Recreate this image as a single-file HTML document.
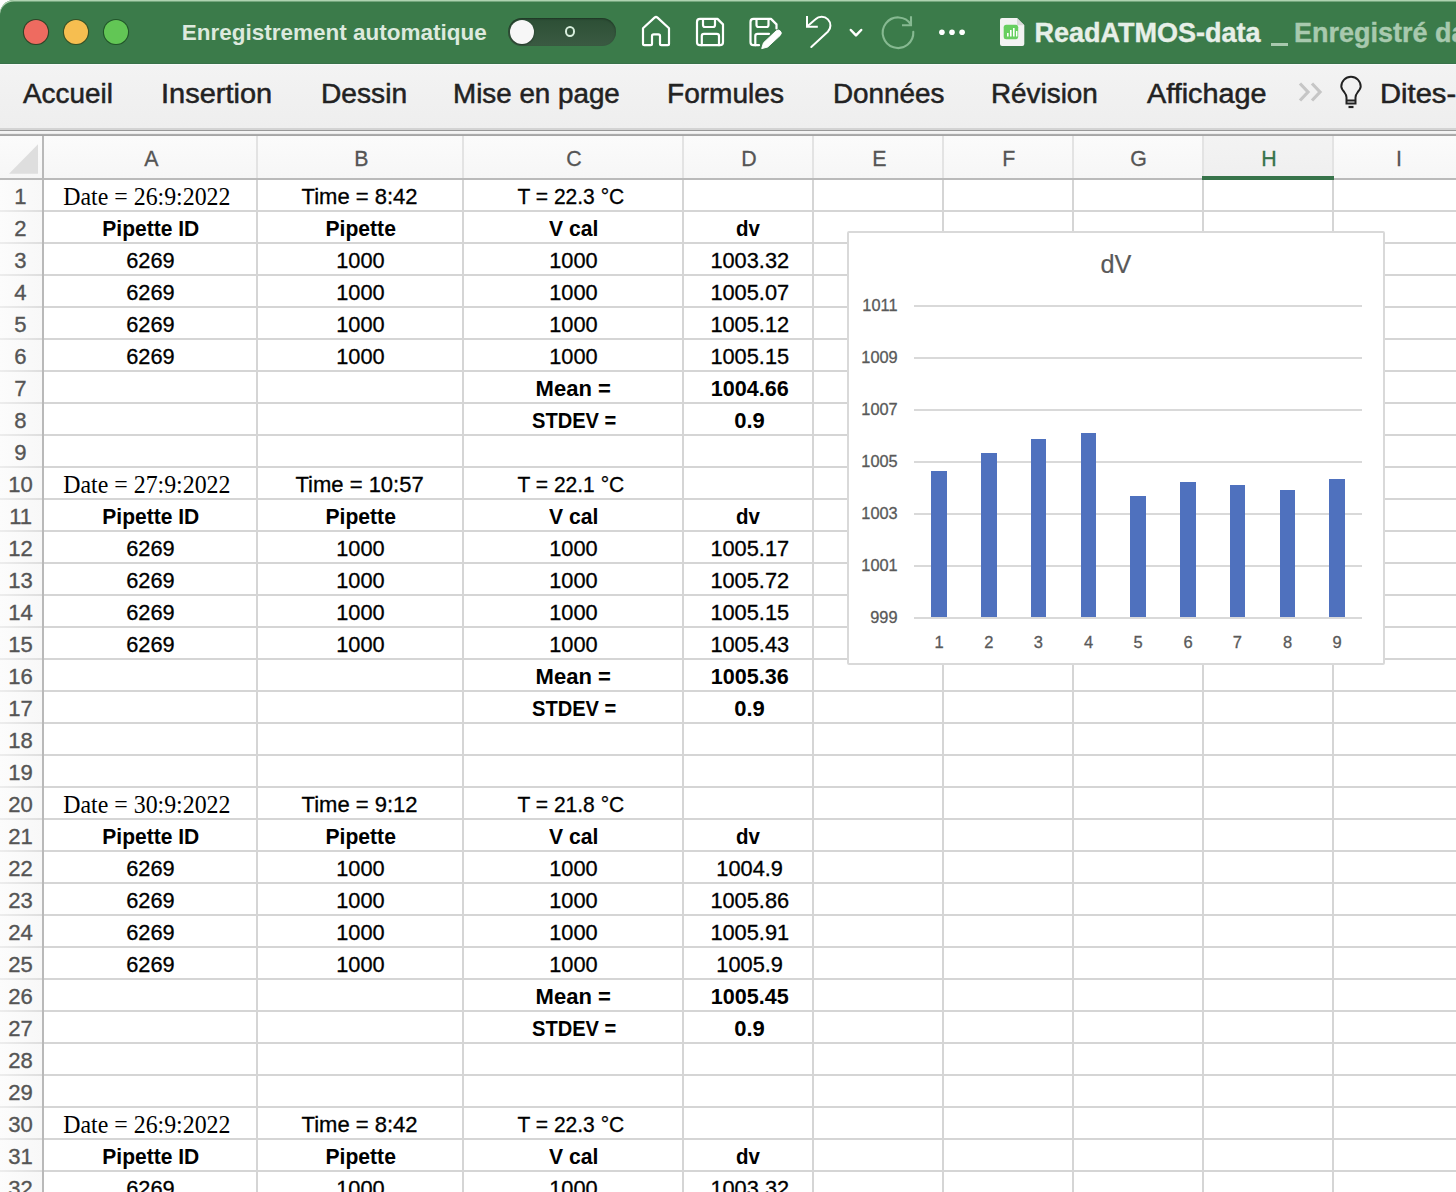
<!DOCTYPE html>
<html><head><meta charset="utf-8"><style>
html,body{margin:0;padding:0;}
body{width:1456px;height:1192px;overflow:hidden;position:relative;background:#fff;font-family:"Liberation Sans",sans-serif;}
.r{position:absolute;box-sizing:content-box;}
.t{position:absolute;line-height:0;height:0;white-space:pre;}
</style></head><body>
<div class="r" style="left:0px;top:0px;width:1456px;height:64px;background:#3b7b4a;border-top-left-radius:14px;box-shadow:inset 0 1.5px 0 #aed2b0;"></div>
<div class="r" style="left:0px;top:63px;width:1456px;height:1px;background:#38724a;"></div>
<div class="r" style="left:23.9px;top:19.6px;width:24px;height:24px;border-radius:50%;background:#ee6b60;box-shadow:0 0 0 1.1px rgba(40,20,10,.55);"></div>
<div class="r" style="left:63.900000000000006px;top:19.6px;width:24px;height:24px;border-radius:50%;background:#f6be50;box-shadow:0 0 0 1.1px rgba(50,40,0,.5);"></div>
<div class="r" style="left:104px;top:19.6px;width:24px;height:24px;border-radius:50%;background:#62c655;box-shadow:0 0 0 1.1px rgba(0,40,0,.45);"></div>
<div class="t" style="left:181.80px;top:32.80px;font-weight:bold;font-size:22.5px;font-family:'Liberation Sans', sans-serif;color:#dde9de;transform-origin:0 0;transform:scaleX(1.0);">Enregistrement automatique</div>
<div class="r" style="left:508px;top:18px;width:108px;height:28px;border-radius:14px;background:linear-gradient(#2c4f35,#3a5a42);box-shadow:inset 0 1px 2px rgba(0,0,0,.35);"></div>
<div class="r" style="left:510px;top:19.8px;width:24px;height:24px;border-radius:50%;background:#f7f7f7;box-shadow:0 1px 2px rgba(0,0,0,.4);"></div>
<div class="r" style="left:564.7px;top:25.9px;width:6.6px;height:7px;border:2px solid #d8eedd;border-radius:50%;"></div>
<svg class="r" style="left:0;top:0" width="1456" height="64" viewBox="0 0 1456 64">
<g fill="none" stroke="#ffffff" stroke-width="2.2" stroke-linejoin="round" stroke-linecap="round">
<path d="M643 28.2 L654.5 17.6 Q656 16.4 657.5 17.6 L669 28.2 L669 43.8 Q669 45.2 667.6 45.2 L661.4 45.2 Q660 45.2 660 43.8 L660 36 Q660 34.3 658.3 34.3 L653.7 34.3 Q652 34.3 652 36 L652 43.8 Q652 45.2 650.6 45.2 L644.4 45.2 Q643 45.2 643 43.8 Z"/>
<path d="M700 18.9 L717.5 18.9 L723 24.4 L723 42.2 Q723 45.2 720 45.2 L700 45.2 Q697 45.2 697 42.2 L697 21.9 Q697 18.9 700 18.9 Z"/>
<path d="M703 19 L703 25 Q703 27 705 27 L713 27 Q715 27 715 25 L715 19"/>
<path d="M701.8 45.2 L701.8 36 Q701.8 33.8 704 33.8 L716.8 33.8 Q719 33.8 719 36 L719 45.2"/>
<path d="M759 45.2 L753.5 45.2 Q750.5 45.2 750.5 42.2 L750.5 21.9 Q750.5 18.9 753.5 18.9 L771 18.9 L776.5 24.4 L776.5 28.5"/>
<path d="M756.5 19 L756.5 25 Q756.5 27 758.5 27 L766.5 27 Q768.5 27 768.5 25 L768.5 19"/>
<path d="M755.3 45.2 L755.3 36 Q755.3 33.8 757.5 33.8 L769 33.8"/>
</g>
<path transform="translate(-1.5,1.8)" d="M763.2 46.8 L765 41 L777.5 29.2 Q779.8 27.2 781.8 29.2 Q783.8 31.2 781.8 33.5 L769.2 45.2 Z" fill="#ffffff" stroke="#ffffff" stroke-width="1" stroke-linejoin="round"/>
<g fill="none" stroke="#ffffff" stroke-width="2.2" stroke-linecap="round" stroke-linejoin="round">
<path d="M807 16 L807 26.8 L817.8 26.8" stroke-linecap="butt" stroke-linejoin="miter" stroke-width="2"/>
<path d="M808 25.8 L815.5 19.3 A8.7 8.7 0 0 1 827.8 31.8 L811.3 47" stroke-width="2"/>
<path d="M850.8 30 L856 35.4 L861.2 30" stroke-width="2.5"/>
</g>
<g fill="none" stroke="#86b991" stroke-width="2.1">
<path d="M913.3 31.8 A15.3 15.3 0 1 1 911 24.6" stroke-linecap="round"/>
<path d="M911 16.2 L911 25.3 L902 25.3" stroke-linecap="butt" stroke-linejoin="miter"/>
</g>
<circle cx="941.9" cy="32.2" r="2.8" fill="#ffffff"/><circle cx="952" cy="32.2" r="2.8" fill="#ffffff"/><circle cx="962.1" cy="32.2" r="2.8" fill="#ffffff"/>
<path d="M1002 18 L1017 18 L1024.3 25.3 L1024.3 44 Q1024.3 46 1022.3 46 L1002 46 Q1000 46 1000 44 L1000 20 Q1000 18 1002 18 Z" fill="#f3f3f3"/>
<path d="M1017 18 L1017 25.3 L1024.3 25.3 Z" fill="#d9d9d9"/>
<rect x="1003.7" y="24.8" width="14.5" height="14.5" rx="2.5" fill="#67cf60"/>
<g fill="#fff"><rect x="1007" y="33" width="1.6" height="3.5"/><rect x="1010" y="30" width="1.6" height="6.5"/><rect x="1013" y="28" width="1.6" height="8.5"/><rect x="1016" y="31" width="1.4" height="5.5"/></g>
</svg>
<div class="t" style="left:1034.50px;top:33.44px;font-weight:bold;font-size:27px;font-family:'Liberation Sans', sans-serif;color:#e7efe8;transform-origin:0 0;transform:scaleX(1.0);-webkit-text-stroke:0.4px #e7efe8;">ReadATMOS-data</div>
<div class="r" style="left:1271px;top:43px;width:17px;height:3px;background:#a8c9ae;"></div>
<div class="t" style="left:1294.00px;top:33.44px;font-weight:bold;font-size:27px;font-family:'Liberation Sans', sans-serif;color:#a8c9ae;transform-origin:0 0;transform:scaleX(1.0);-webkit-text-stroke:0.4px #a8c9ae;">Enregistré da</div>
<div class="r" style="left:0px;top:64px;width:1456px;height:1px;background:#f9fbf9;"></div>
<div class="r" style="left:0px;top:65px;width:1456px;height:63px;background:linear-gradient(#f3f3f3,#eeeeee);"></div>
<div class="r" style="left:0px;top:128px;width:1456px;height:2px;background:#d3d3d3;"></div>
<div class="r" style="left:0px;top:130px;width:1456px;height:1px;background:#9a9a9a;"></div>
<div class="r" style="left:0px;top:131px;width:1456px;height:2px;background:#f4f4f4;"></div>
<div class="r" style="left:0px;top:133px;width:1456px;height:1px;background:#ebebeb;"></div>
<div class="r" style="left:0px;top:134px;width:1456px;height:1px;background:#acacac;"></div>
<div class="r" style="left:0px;top:135px;width:1456px;height:1px;background:#a6a6a6;"></div>
<div class="t" style="left:23.20px;top:93.84px;font-weight:normal;font-size:27px;font-family:'Liberation Sans', sans-serif;color:#222222;transform-origin:0 0;transform:scaleX(1.032);-webkit-text-stroke:0.5px #222;">Accueil</div>
<div class="t" style="left:161.20px;top:93.84px;font-weight:normal;font-size:27px;font-family:'Liberation Sans', sans-serif;color:#222222;transform-origin:0 0;transform:scaleX(1.073);-webkit-text-stroke:0.5px #222;">Insertion</div>
<div class="t" style="left:321.00px;top:93.84px;font-weight:normal;font-size:27px;font-family:'Liberation Sans', sans-serif;color:#222222;transform-origin:0 0;transform:scaleX(1.043);-webkit-text-stroke:0.5px #222;">Dessin</div>
<div class="t" style="left:452.90px;top:93.84px;font-weight:normal;font-size:27px;font-family:'Liberation Sans', sans-serif;color:#222222;transform-origin:0 0;transform:scaleX(1.029);-webkit-text-stroke:0.5px #222;">Mise en page</div>
<div class="t" style="left:666.50px;top:93.84px;font-weight:normal;font-size:27px;font-family:'Liberation Sans', sans-serif;color:#222222;transform-origin:0 0;transform:scaleX(1.039);-webkit-text-stroke:0.5px #222;">Formules</div>
<div class="t" style="left:832.50px;top:93.84px;font-weight:normal;font-size:27px;font-family:'Liberation Sans', sans-serif;color:#222222;transform-origin:0 0;transform:scaleX(1.032);-webkit-text-stroke:0.5px #222;">Données</div>
<div class="t" style="left:991.30px;top:93.84px;font-weight:normal;font-size:27px;font-family:'Liberation Sans', sans-serif;color:#222222;transform-origin:0 0;transform:scaleX(1.032);-webkit-text-stroke:0.5px #222;">Révision</div>
<div class="t" style="left:1146.90px;top:93.84px;font-weight:normal;font-size:27px;font-family:'Liberation Sans', sans-serif;color:#222222;transform-origin:0 0;transform:scaleX(1.067);-webkit-text-stroke:0.5px #222;">Affichage</div>
<svg class="r" style="left:0;top:64" width="1456" height="64" viewBox="0 64 1456 64">
<g fill="none" stroke="#c6c6c6" stroke-width="3.2" stroke-linecap="butt" stroke-linejoin="miter">
<path d="M1300 83.5 L1308 92 L1300 100.5"/><path d="M1312 83.5 L1320 92 L1312 100.5"/>
</g>
<g fill="none" stroke="#222" stroke-width="2">
<path d="M1346.5 97.5 Q1346.5 95 1344.2 92 Q1341.3 88.5 1341.3 86.5 A9.7 9.7 0 0 1 1360.7 86.5 Q1360.7 88.5 1357.8 92 Q1355.5 95 1355.5 97.5 L1355.5 103.5 L1346.5 103.5 Z"/>
<path d="M1346.5 100.5 L1355.5 100.5"/><path d="M1348.5 107 L1353.5 107" stroke-width="2.2"/>
</g>
</svg>
<div class="t" style="left:1379.90px;top:93.84px;font-weight:normal;font-size:27px;font-family:'Liberation Sans', sans-serif;color:#222222;transform-origin:0 0;transform:scaleX(1.08);-webkit-text-stroke:0.5px #222;">Dites-</div>
<div class="r" style="left:0px;top:136px;width:1456px;height:42px;background:linear-gradient(#fbfbfb,#f6f6f6);"></div>
<div class="r" style="left:1203px;top:136px;width:130px;height:42px;background:linear-gradient(#f3f3f3,#efefef);"></div>
<div class="r" style="left:0px;top:179px;width:42px;height:1013px;background:linear-gradient(to right,#fcfcfc,#f8f8f8);"></div>
<div class="r" style="left:43px;top:180px;width:1413px;height:1012px;background:#ffffff;"></div>
<div class="r" style="left:0px;top:210px;width:42px;height:2px;background:linear-gradient(to right,#ededed,#dedede);"></div>
<div class="r" style="left:43px;top:210px;width:1413px;height:2px;background:#d5d5d5;"></div>
<div class="r" style="left:0px;top:242px;width:42px;height:2px;background:linear-gradient(to right,#ededed,#dedede);"></div>
<div class="r" style="left:43px;top:242px;width:1413px;height:2px;background:#d5d5d5;"></div>
<div class="r" style="left:0px;top:274px;width:42px;height:2px;background:linear-gradient(to right,#ededed,#dedede);"></div>
<div class="r" style="left:43px;top:274px;width:1413px;height:2px;background:#d5d5d5;"></div>
<div class="r" style="left:0px;top:306px;width:42px;height:2px;background:linear-gradient(to right,#ededed,#dedede);"></div>
<div class="r" style="left:43px;top:306px;width:1413px;height:2px;background:#d5d5d5;"></div>
<div class="r" style="left:0px;top:338px;width:42px;height:2px;background:linear-gradient(to right,#ededed,#dedede);"></div>
<div class="r" style="left:43px;top:338px;width:1413px;height:2px;background:#d5d5d5;"></div>
<div class="r" style="left:0px;top:370px;width:42px;height:2px;background:linear-gradient(to right,#ededed,#dedede);"></div>
<div class="r" style="left:43px;top:370px;width:1413px;height:2px;background:#d5d5d5;"></div>
<div class="r" style="left:0px;top:402px;width:42px;height:2px;background:linear-gradient(to right,#ededed,#dedede);"></div>
<div class="r" style="left:43px;top:402px;width:1413px;height:2px;background:#d5d5d5;"></div>
<div class="r" style="left:0px;top:434px;width:42px;height:2px;background:linear-gradient(to right,#ededed,#dedede);"></div>
<div class="r" style="left:43px;top:434px;width:1413px;height:2px;background:#d5d5d5;"></div>
<div class="r" style="left:0px;top:466px;width:42px;height:2px;background:linear-gradient(to right,#ededed,#dedede);"></div>
<div class="r" style="left:43px;top:466px;width:1413px;height:2px;background:#d5d5d5;"></div>
<div class="r" style="left:0px;top:498px;width:42px;height:2px;background:linear-gradient(to right,#ededed,#dedede);"></div>
<div class="r" style="left:43px;top:498px;width:1413px;height:2px;background:#d5d5d5;"></div>
<div class="r" style="left:0px;top:530px;width:42px;height:2px;background:linear-gradient(to right,#ededed,#dedede);"></div>
<div class="r" style="left:43px;top:530px;width:1413px;height:2px;background:#d5d5d5;"></div>
<div class="r" style="left:0px;top:562px;width:42px;height:2px;background:linear-gradient(to right,#ededed,#dedede);"></div>
<div class="r" style="left:43px;top:562px;width:1413px;height:2px;background:#d5d5d5;"></div>
<div class="r" style="left:0px;top:594px;width:42px;height:2px;background:linear-gradient(to right,#ededed,#dedede);"></div>
<div class="r" style="left:43px;top:594px;width:1413px;height:2px;background:#d5d5d5;"></div>
<div class="r" style="left:0px;top:626px;width:42px;height:2px;background:linear-gradient(to right,#ededed,#dedede);"></div>
<div class="r" style="left:43px;top:626px;width:1413px;height:2px;background:#d5d5d5;"></div>
<div class="r" style="left:0px;top:658px;width:42px;height:2px;background:linear-gradient(to right,#ededed,#dedede);"></div>
<div class="r" style="left:43px;top:658px;width:1413px;height:2px;background:#d5d5d5;"></div>
<div class="r" style="left:0px;top:690px;width:42px;height:2px;background:linear-gradient(to right,#ededed,#dedede);"></div>
<div class="r" style="left:43px;top:690px;width:1413px;height:2px;background:#d5d5d5;"></div>
<div class="r" style="left:0px;top:722px;width:42px;height:2px;background:linear-gradient(to right,#ededed,#dedede);"></div>
<div class="r" style="left:43px;top:722px;width:1413px;height:2px;background:#d5d5d5;"></div>
<div class="r" style="left:0px;top:754px;width:42px;height:2px;background:linear-gradient(to right,#ededed,#dedede);"></div>
<div class="r" style="left:43px;top:754px;width:1413px;height:2px;background:#d5d5d5;"></div>
<div class="r" style="left:0px;top:786px;width:42px;height:2px;background:linear-gradient(to right,#ededed,#dedede);"></div>
<div class="r" style="left:43px;top:786px;width:1413px;height:2px;background:#d5d5d5;"></div>
<div class="r" style="left:0px;top:818px;width:42px;height:2px;background:linear-gradient(to right,#ededed,#dedede);"></div>
<div class="r" style="left:43px;top:818px;width:1413px;height:2px;background:#d5d5d5;"></div>
<div class="r" style="left:0px;top:850px;width:42px;height:2px;background:linear-gradient(to right,#ededed,#dedede);"></div>
<div class="r" style="left:43px;top:850px;width:1413px;height:2px;background:#d5d5d5;"></div>
<div class="r" style="left:0px;top:882px;width:42px;height:2px;background:linear-gradient(to right,#ededed,#dedede);"></div>
<div class="r" style="left:43px;top:882px;width:1413px;height:2px;background:#d5d5d5;"></div>
<div class="r" style="left:0px;top:914px;width:42px;height:2px;background:linear-gradient(to right,#ededed,#dedede);"></div>
<div class="r" style="left:43px;top:914px;width:1413px;height:2px;background:#d5d5d5;"></div>
<div class="r" style="left:0px;top:946px;width:42px;height:2px;background:linear-gradient(to right,#ededed,#dedede);"></div>
<div class="r" style="left:43px;top:946px;width:1413px;height:2px;background:#d5d5d5;"></div>
<div class="r" style="left:0px;top:978px;width:42px;height:2px;background:linear-gradient(to right,#ededed,#dedede);"></div>
<div class="r" style="left:43px;top:978px;width:1413px;height:2px;background:#d5d5d5;"></div>
<div class="r" style="left:0px;top:1010px;width:42px;height:2px;background:linear-gradient(to right,#ededed,#dedede);"></div>
<div class="r" style="left:43px;top:1010px;width:1413px;height:2px;background:#d5d5d5;"></div>
<div class="r" style="left:0px;top:1042px;width:42px;height:2px;background:linear-gradient(to right,#ededed,#dedede);"></div>
<div class="r" style="left:43px;top:1042px;width:1413px;height:2px;background:#d5d5d5;"></div>
<div class="r" style="left:0px;top:1074px;width:42px;height:2px;background:linear-gradient(to right,#ededed,#dedede);"></div>
<div class="r" style="left:43px;top:1074px;width:1413px;height:2px;background:#d5d5d5;"></div>
<div class="r" style="left:0px;top:1106px;width:42px;height:2px;background:linear-gradient(to right,#ededed,#dedede);"></div>
<div class="r" style="left:43px;top:1106px;width:1413px;height:2px;background:#d5d5d5;"></div>
<div class="r" style="left:0px;top:1138px;width:42px;height:2px;background:linear-gradient(to right,#ededed,#dedede);"></div>
<div class="r" style="left:43px;top:1138px;width:1413px;height:2px;background:#d5d5d5;"></div>
<div class="r" style="left:0px;top:1170px;width:42px;height:2px;background:linear-gradient(to right,#ededed,#dedede);"></div>
<div class="r" style="left:43px;top:1170px;width:1413px;height:2px;background:#d5d5d5;"></div>
<div class="r" style="left:0px;top:1202px;width:42px;height:2px;background:linear-gradient(to right,#ededed,#dedede);"></div>
<div class="r" style="left:43px;top:1202px;width:1413px;height:2px;background:#d5d5d5;"></div>
<div class="r" style="left:256px;top:136px;width:2px;height:42px;background:#e3e3e3;"></div>
<div class="r" style="left:256px;top:180px;width:2px;height:1012px;background:#d5d5d5;"></div>
<div class="r" style="left:462px;top:136px;width:2px;height:42px;background:#e3e3e3;"></div>
<div class="r" style="left:462px;top:180px;width:2px;height:1012px;background:#d5d5d5;"></div>
<div class="r" style="left:682px;top:136px;width:2px;height:42px;background:#e3e3e3;"></div>
<div class="r" style="left:682px;top:180px;width:2px;height:1012px;background:#d5d5d5;"></div>
<div class="r" style="left:812px;top:136px;width:2px;height:42px;background:#e3e3e3;"></div>
<div class="r" style="left:812px;top:180px;width:2px;height:1012px;background:#d5d5d5;"></div>
<div class="r" style="left:942px;top:136px;width:2px;height:42px;background:#e3e3e3;"></div>
<div class="r" style="left:942px;top:180px;width:2px;height:1012px;background:#d5d5d5;"></div>
<div class="r" style="left:1072px;top:136px;width:2px;height:42px;background:#e3e3e3;"></div>
<div class="r" style="left:1072px;top:180px;width:2px;height:1012px;background:#d5d5d5;"></div>
<div class="r" style="left:1202px;top:136px;width:2px;height:42px;background:#e3e3e3;"></div>
<div class="r" style="left:1202px;top:180px;width:2px;height:1012px;background:#d5d5d5;"></div>
<div class="r" style="left:1332px;top:136px;width:2px;height:42px;background:#e3e3e3;"></div>
<div class="r" style="left:1332px;top:180px;width:2px;height:1012px;background:#d5d5d5;"></div>
<div class="r" style="left:0px;top:178px;width:1456px;height:2px;background:#bababa;"></div>
<div class="r" style="left:42px;top:136px;width:2px;height:1056px;background:#b9b9b9;"></div>
<div class="r" style="left:1202px;top:176px;width:132px;height:4px;background:#37734a;"></div>
<svg class="r" style="left:0;top:135" width="42" height="43" viewBox="0 135 42 43"><path d="M9 173.8 L38 144.2 L38 173.8 Z" fill="#dedede"/></svg>
<div class="t" style="left:-149.00px;width:600px;top:158.58px;text-align:center;font-weight:normal;font-size:22px;font-family:'Liberation Sans', sans-serif;color:#555555;-webkit-text-stroke:0.3px #555555;"><span style="display:inline-block;transform:scaleX(0.97)">A</span></div>
<div class="t" style="left:61.00px;width:600px;top:158.58px;text-align:center;font-weight:normal;font-size:22px;font-family:'Liberation Sans', sans-serif;color:#555555;-webkit-text-stroke:0.3px #555555;"><span style="display:inline-block;transform:scaleX(0.97)">B</span></div>
<div class="t" style="left:274.00px;width:600px;top:158.58px;text-align:center;font-weight:normal;font-size:22px;font-family:'Liberation Sans', sans-serif;color:#555555;-webkit-text-stroke:0.3px #555555;"><span style="display:inline-block;transform:scaleX(0.97)">C</span></div>
<div class="t" style="left:449.00px;width:600px;top:158.58px;text-align:center;font-weight:normal;font-size:22px;font-family:'Liberation Sans', sans-serif;color:#555555;-webkit-text-stroke:0.3px #555555;"><span style="display:inline-block;transform:scaleX(0.97)">D</span></div>
<div class="t" style="left:579.00px;width:600px;top:158.58px;text-align:center;font-weight:normal;font-size:22px;font-family:'Liberation Sans', sans-serif;color:#555555;-webkit-text-stroke:0.3px #555555;"><span style="display:inline-block;transform:scaleX(0.97)">E</span></div>
<div class="t" style="left:709.00px;width:600px;top:158.58px;text-align:center;font-weight:normal;font-size:22px;font-family:'Liberation Sans', sans-serif;color:#555555;-webkit-text-stroke:0.3px #555555;"><span style="display:inline-block;transform:scaleX(0.97)">F</span></div>
<div class="t" style="left:839.00px;width:600px;top:158.58px;text-align:center;font-weight:normal;font-size:22px;font-family:'Liberation Sans', sans-serif;color:#555555;-webkit-text-stroke:0.3px #555555;"><span style="display:inline-block;transform:scaleX(0.97)">G</span></div>
<div class="t" style="left:969.00px;width:600px;top:158.58px;text-align:center;font-weight:normal;font-size:22px;font-family:'Liberation Sans', sans-serif;color:#37734a;-webkit-text-stroke:0.3px #37734a;"><span style="display:inline-block;transform:scaleX(0.97)">H</span></div>
<div class="t" style="left:1099.00px;width:600px;top:158.58px;text-align:center;font-weight:normal;font-size:22px;font-family:'Liberation Sans', sans-serif;color:#555555;-webkit-text-stroke:0.3px #555555;"><span style="display:inline-block;transform:scaleX(0.97)">I</span></div>
<div class="t" style="left:-279.50px;width:600px;top:197.00px;text-align:center;font-weight:normal;font-size:22.5px;font-family:'Liberation Sans', sans-serif;color:#555555;-webkit-text-stroke:0.35px #555555;"><span style="display:inline-block;transform:scaleX(0.98)">1</span></div>
<div class="t" style="left:-279.50px;width:600px;top:229.00px;text-align:center;font-weight:normal;font-size:22.5px;font-family:'Liberation Sans', sans-serif;color:#555555;-webkit-text-stroke:0.35px #555555;"><span style="display:inline-block;transform:scaleX(0.98)">2</span></div>
<div class="t" style="left:-279.50px;width:600px;top:261.00px;text-align:center;font-weight:normal;font-size:22.5px;font-family:'Liberation Sans', sans-serif;color:#555555;-webkit-text-stroke:0.35px #555555;"><span style="display:inline-block;transform:scaleX(0.98)">3</span></div>
<div class="t" style="left:-279.50px;width:600px;top:293.00px;text-align:center;font-weight:normal;font-size:22.5px;font-family:'Liberation Sans', sans-serif;color:#555555;-webkit-text-stroke:0.35px #555555;"><span style="display:inline-block;transform:scaleX(0.98)">4</span></div>
<div class="t" style="left:-279.50px;width:600px;top:325.00px;text-align:center;font-weight:normal;font-size:22.5px;font-family:'Liberation Sans', sans-serif;color:#555555;-webkit-text-stroke:0.35px #555555;"><span style="display:inline-block;transform:scaleX(0.98)">5</span></div>
<div class="t" style="left:-279.50px;width:600px;top:357.00px;text-align:center;font-weight:normal;font-size:22.5px;font-family:'Liberation Sans', sans-serif;color:#555555;-webkit-text-stroke:0.35px #555555;"><span style="display:inline-block;transform:scaleX(0.98)">6</span></div>
<div class="t" style="left:-279.50px;width:600px;top:389.00px;text-align:center;font-weight:normal;font-size:22.5px;font-family:'Liberation Sans', sans-serif;color:#555555;-webkit-text-stroke:0.35px #555555;"><span style="display:inline-block;transform:scaleX(0.98)">7</span></div>
<div class="t" style="left:-279.50px;width:600px;top:421.00px;text-align:center;font-weight:normal;font-size:22.5px;font-family:'Liberation Sans', sans-serif;color:#555555;-webkit-text-stroke:0.35px #555555;"><span style="display:inline-block;transform:scaleX(0.98)">8</span></div>
<div class="t" style="left:-279.50px;width:600px;top:453.00px;text-align:center;font-weight:normal;font-size:22.5px;font-family:'Liberation Sans', sans-serif;color:#555555;-webkit-text-stroke:0.35px #555555;"><span style="display:inline-block;transform:scaleX(0.98)">9</span></div>
<div class="t" style="left:-279.50px;width:600px;top:485.00px;text-align:center;font-weight:normal;font-size:22.5px;font-family:'Liberation Sans', sans-serif;color:#555555;-webkit-text-stroke:0.35px #555555;"><span style="display:inline-block;transform:scaleX(0.98)">10</span></div>
<div class="t" style="left:-279.50px;width:600px;top:517.00px;text-align:center;font-weight:normal;font-size:22.5px;font-family:'Liberation Sans', sans-serif;color:#555555;-webkit-text-stroke:0.35px #555555;"><span style="display:inline-block;transform:scaleX(0.98)">11</span></div>
<div class="t" style="left:-279.50px;width:600px;top:549.00px;text-align:center;font-weight:normal;font-size:22.5px;font-family:'Liberation Sans', sans-serif;color:#555555;-webkit-text-stroke:0.35px #555555;"><span style="display:inline-block;transform:scaleX(0.98)">12</span></div>
<div class="t" style="left:-279.50px;width:600px;top:581.00px;text-align:center;font-weight:normal;font-size:22.5px;font-family:'Liberation Sans', sans-serif;color:#555555;-webkit-text-stroke:0.35px #555555;"><span style="display:inline-block;transform:scaleX(0.98)">13</span></div>
<div class="t" style="left:-279.50px;width:600px;top:613.00px;text-align:center;font-weight:normal;font-size:22.5px;font-family:'Liberation Sans', sans-serif;color:#555555;-webkit-text-stroke:0.35px #555555;"><span style="display:inline-block;transform:scaleX(0.98)">14</span></div>
<div class="t" style="left:-279.50px;width:600px;top:645.00px;text-align:center;font-weight:normal;font-size:22.5px;font-family:'Liberation Sans', sans-serif;color:#555555;-webkit-text-stroke:0.35px #555555;"><span style="display:inline-block;transform:scaleX(0.98)">15</span></div>
<div class="t" style="left:-279.50px;width:600px;top:677.00px;text-align:center;font-weight:normal;font-size:22.5px;font-family:'Liberation Sans', sans-serif;color:#555555;-webkit-text-stroke:0.35px #555555;"><span style="display:inline-block;transform:scaleX(0.98)">16</span></div>
<div class="t" style="left:-279.50px;width:600px;top:709.00px;text-align:center;font-weight:normal;font-size:22.5px;font-family:'Liberation Sans', sans-serif;color:#555555;-webkit-text-stroke:0.35px #555555;"><span style="display:inline-block;transform:scaleX(0.98)">17</span></div>
<div class="t" style="left:-279.50px;width:600px;top:741.00px;text-align:center;font-weight:normal;font-size:22.5px;font-family:'Liberation Sans', sans-serif;color:#555555;-webkit-text-stroke:0.35px #555555;"><span style="display:inline-block;transform:scaleX(0.98)">18</span></div>
<div class="t" style="left:-279.50px;width:600px;top:773.00px;text-align:center;font-weight:normal;font-size:22.5px;font-family:'Liberation Sans', sans-serif;color:#555555;-webkit-text-stroke:0.35px #555555;"><span style="display:inline-block;transform:scaleX(0.98)">19</span></div>
<div class="t" style="left:-279.50px;width:600px;top:805.00px;text-align:center;font-weight:normal;font-size:22.5px;font-family:'Liberation Sans', sans-serif;color:#555555;-webkit-text-stroke:0.35px #555555;"><span style="display:inline-block;transform:scaleX(0.98)">20</span></div>
<div class="t" style="left:-279.50px;width:600px;top:837.00px;text-align:center;font-weight:normal;font-size:22.5px;font-family:'Liberation Sans', sans-serif;color:#555555;-webkit-text-stroke:0.35px #555555;"><span style="display:inline-block;transform:scaleX(0.98)">21</span></div>
<div class="t" style="left:-279.50px;width:600px;top:869.00px;text-align:center;font-weight:normal;font-size:22.5px;font-family:'Liberation Sans', sans-serif;color:#555555;-webkit-text-stroke:0.35px #555555;"><span style="display:inline-block;transform:scaleX(0.98)">22</span></div>
<div class="t" style="left:-279.50px;width:600px;top:901.00px;text-align:center;font-weight:normal;font-size:22.5px;font-family:'Liberation Sans', sans-serif;color:#555555;-webkit-text-stroke:0.35px #555555;"><span style="display:inline-block;transform:scaleX(0.98)">23</span></div>
<div class="t" style="left:-279.50px;width:600px;top:933.00px;text-align:center;font-weight:normal;font-size:22.5px;font-family:'Liberation Sans', sans-serif;color:#555555;-webkit-text-stroke:0.35px #555555;"><span style="display:inline-block;transform:scaleX(0.98)">24</span></div>
<div class="t" style="left:-279.50px;width:600px;top:965.00px;text-align:center;font-weight:normal;font-size:22.5px;font-family:'Liberation Sans', sans-serif;color:#555555;-webkit-text-stroke:0.35px #555555;"><span style="display:inline-block;transform:scaleX(0.98)">25</span></div>
<div class="t" style="left:-279.50px;width:600px;top:997.00px;text-align:center;font-weight:normal;font-size:22.5px;font-family:'Liberation Sans', sans-serif;color:#555555;-webkit-text-stroke:0.35px #555555;"><span style="display:inline-block;transform:scaleX(0.98)">26</span></div>
<div class="t" style="left:-279.50px;width:600px;top:1029.00px;text-align:center;font-weight:normal;font-size:22.5px;font-family:'Liberation Sans', sans-serif;color:#555555;-webkit-text-stroke:0.35px #555555;"><span style="display:inline-block;transform:scaleX(0.98)">27</span></div>
<div class="t" style="left:-279.50px;width:600px;top:1061.00px;text-align:center;font-weight:normal;font-size:22.5px;font-family:'Liberation Sans', sans-serif;color:#555555;-webkit-text-stroke:0.35px #555555;"><span style="display:inline-block;transform:scaleX(0.98)">28</span></div>
<div class="t" style="left:-279.50px;width:600px;top:1093.00px;text-align:center;font-weight:normal;font-size:22.5px;font-family:'Liberation Sans', sans-serif;color:#555555;-webkit-text-stroke:0.35px #555555;"><span style="display:inline-block;transform:scaleX(0.98)">29</span></div>
<div class="t" style="left:-279.50px;width:600px;top:1125.00px;text-align:center;font-weight:normal;font-size:22.5px;font-family:'Liberation Sans', sans-serif;color:#555555;-webkit-text-stroke:0.35px #555555;"><span style="display:inline-block;transform:scaleX(0.98)">30</span></div>
<div class="t" style="left:-279.50px;width:600px;top:1157.00px;text-align:center;font-weight:normal;font-size:22.5px;font-family:'Liberation Sans', sans-serif;color:#555555;-webkit-text-stroke:0.35px #555555;"><span style="display:inline-block;transform:scaleX(0.98)">31</span></div>
<div class="t" style="left:-279.50px;width:600px;top:1189.00px;text-align:center;font-weight:normal;font-size:22.5px;font-family:'Liberation Sans', sans-serif;color:#555555;-webkit-text-stroke:0.35px #555555;"><span style="display:inline-block;transform:scaleX(0.98)">32</span></div>
<div class="t" style="left:-153.00px;width:600px;top:197.13px;text-align:center;font-weight:normal;font-size:24.8px;font-family:'Liberation Serif', serif;color:#000;"><span style="display:inline-block;transform:scaleX(0.962)">Date = 26:9:2022</span></div>
<div class="t" style="left:59.60px;width:600px;top:197.38px;text-align:center;font-weight:normal;font-size:22px;font-family:'Liberation Sans', sans-serif;color:#000;-webkit-text-stroke:0.3px #000;"><span style="display:inline-block;transform:scaleX(1.0)">Time = 8:42</span></div>
<div class="t" style="left:270.40px;width:600px;top:197.38px;text-align:center;font-weight:normal;font-size:22px;font-family:'Liberation Sans', sans-serif;color:#000;-webkit-text-stroke:0.3px #000;"><span style="display:inline-block;transform:scaleX(0.955)">T = 22.3 °C</span></div>
<div class="t" style="left:-149.40px;width:600px;top:229.38px;text-align:center;font-weight:bold;font-size:22px;font-family:'Liberation Sans', sans-serif;color:#000;"><span style="display:inline-block;transform:scaleX(0.955)">Pipette ID</span></div>
<div class="t" style="left:61.10px;width:600px;top:229.38px;text-align:center;font-weight:bold;font-size:22px;font-family:'Liberation Sans', sans-serif;color:#000;"><span style="display:inline-block;transform:scaleX(0.96)">Pipette</span></div>
<div class="t" style="left:273.70px;width:600px;top:229.38px;text-align:center;font-weight:bold;font-size:22px;font-family:'Liberation Sans', sans-serif;color:#000;"><span style="display:inline-block;transform:scaleX(0.96)">V cal</span></div>
<div class="t" style="left:447.90px;width:600px;top:229.38px;text-align:center;font-weight:bold;font-size:22px;font-family:'Liberation Sans', sans-serif;color:#000;"><span style="display:inline-block;transform:scaleX(0.93)">dv</span></div>
<div class="t" style="left:-149.80px;width:600px;top:261.38px;text-align:center;font-weight:normal;font-size:22px;font-family:'Liberation Sans', sans-serif;color:#000;-webkit-text-stroke:0.3px #000;"><span style="display:inline-block;transform:scaleX(0.99)">6269</span></div>
<div class="t" style="left:60.00px;width:600px;top:261.38px;text-align:center;font-weight:normal;font-size:22px;font-family:'Liberation Sans', sans-serif;color:#000;-webkit-text-stroke:0.3px #000;"><span style="display:inline-block;transform:scaleX(0.99)">1000</span></div>
<div class="t" style="left:273.00px;width:600px;top:261.38px;text-align:center;font-weight:normal;font-size:22px;font-family:'Liberation Sans', sans-serif;color:#000;-webkit-text-stroke:0.3px #000;"><span style="display:inline-block;transform:scaleX(0.99)">1000</span></div>
<div class="t" style="left:449.30px;width:600px;top:261.38px;text-align:center;font-weight:normal;font-size:22px;font-family:'Liberation Sans', sans-serif;color:#000;-webkit-text-stroke:0.3px #000;"><span style="display:inline-block;transform:scaleX(0.99)">1003.32</span></div>
<div class="t" style="left:-149.80px;width:600px;top:293.38px;text-align:center;font-weight:normal;font-size:22px;font-family:'Liberation Sans', sans-serif;color:#000;-webkit-text-stroke:0.3px #000;"><span style="display:inline-block;transform:scaleX(0.99)">6269</span></div>
<div class="t" style="left:60.00px;width:600px;top:293.38px;text-align:center;font-weight:normal;font-size:22px;font-family:'Liberation Sans', sans-serif;color:#000;-webkit-text-stroke:0.3px #000;"><span style="display:inline-block;transform:scaleX(0.99)">1000</span></div>
<div class="t" style="left:273.00px;width:600px;top:293.38px;text-align:center;font-weight:normal;font-size:22px;font-family:'Liberation Sans', sans-serif;color:#000;-webkit-text-stroke:0.3px #000;"><span style="display:inline-block;transform:scaleX(0.99)">1000</span></div>
<div class="t" style="left:449.30px;width:600px;top:293.38px;text-align:center;font-weight:normal;font-size:22px;font-family:'Liberation Sans', sans-serif;color:#000;-webkit-text-stroke:0.3px #000;"><span style="display:inline-block;transform:scaleX(0.99)">1005.07</span></div>
<div class="t" style="left:-149.80px;width:600px;top:325.38px;text-align:center;font-weight:normal;font-size:22px;font-family:'Liberation Sans', sans-serif;color:#000;-webkit-text-stroke:0.3px #000;"><span style="display:inline-block;transform:scaleX(0.99)">6269</span></div>
<div class="t" style="left:60.00px;width:600px;top:325.38px;text-align:center;font-weight:normal;font-size:22px;font-family:'Liberation Sans', sans-serif;color:#000;-webkit-text-stroke:0.3px #000;"><span style="display:inline-block;transform:scaleX(0.99)">1000</span></div>
<div class="t" style="left:273.00px;width:600px;top:325.38px;text-align:center;font-weight:normal;font-size:22px;font-family:'Liberation Sans', sans-serif;color:#000;-webkit-text-stroke:0.3px #000;"><span style="display:inline-block;transform:scaleX(0.99)">1000</span></div>
<div class="t" style="left:449.30px;width:600px;top:325.38px;text-align:center;font-weight:normal;font-size:22px;font-family:'Liberation Sans', sans-serif;color:#000;-webkit-text-stroke:0.3px #000;"><span style="display:inline-block;transform:scaleX(0.99)">1005.12</span></div>
<div class="t" style="left:-149.80px;width:600px;top:357.38px;text-align:center;font-weight:normal;font-size:22px;font-family:'Liberation Sans', sans-serif;color:#000;-webkit-text-stroke:0.3px #000;"><span style="display:inline-block;transform:scaleX(0.99)">6269</span></div>
<div class="t" style="left:60.00px;width:600px;top:357.38px;text-align:center;font-weight:normal;font-size:22px;font-family:'Liberation Sans', sans-serif;color:#000;-webkit-text-stroke:0.3px #000;"><span style="display:inline-block;transform:scaleX(0.99)">1000</span></div>
<div class="t" style="left:273.00px;width:600px;top:357.38px;text-align:center;font-weight:normal;font-size:22px;font-family:'Liberation Sans', sans-serif;color:#000;-webkit-text-stroke:0.3px #000;"><span style="display:inline-block;transform:scaleX(0.99)">1000</span></div>
<div class="t" style="left:449.30px;width:600px;top:357.38px;text-align:center;font-weight:normal;font-size:22px;font-family:'Liberation Sans', sans-serif;color:#000;-webkit-text-stroke:0.3px #000;"><span style="display:inline-block;transform:scaleX(0.99)">1005.15</span></div>
<div class="t" style="left:273.20px;width:600px;top:389.38px;text-align:center;font-weight:bold;font-size:22px;font-family:'Liberation Sans', sans-serif;color:#000;"><span style="display:inline-block;transform:scaleX(1.0)">Mean =</span></div>
<div class="t" style="left:449.50px;width:600px;top:389.38px;text-align:center;font-weight:bold;font-size:22px;font-family:'Liberation Sans', sans-serif;color:#000;"><span style="display:inline-block;transform:scaleX(0.98)">1004.66</span></div>
<div class="t" style="left:273.70px;width:600px;top:421.38px;text-align:center;font-weight:bold;font-size:22px;font-family:'Liberation Sans', sans-serif;color:#000;"><span style="display:inline-block;transform:scaleX(0.913)">STDEV =</span></div>
<div class="t" style="left:449.50px;width:600px;top:421.38px;text-align:center;font-weight:bold;font-size:22px;font-family:'Liberation Sans', sans-serif;color:#000;"><span style="display:inline-block;transform:scaleX(1.0)">0.9</span></div>
<div class="t" style="left:-153.00px;width:600px;top:485.13px;text-align:center;font-weight:normal;font-size:24.8px;font-family:'Liberation Serif', serif;color:#000;"><span style="display:inline-block;transform:scaleX(0.962)">Date = 27:9:2022</span></div>
<div class="t" style="left:59.60px;width:600px;top:485.38px;text-align:center;font-weight:normal;font-size:22px;font-family:'Liberation Sans', sans-serif;color:#000;-webkit-text-stroke:0.3px #000;"><span style="display:inline-block;transform:scaleX(1.0)">Time = 10:57</span></div>
<div class="t" style="left:270.40px;width:600px;top:485.38px;text-align:center;font-weight:normal;font-size:22px;font-family:'Liberation Sans', sans-serif;color:#000;-webkit-text-stroke:0.3px #000;"><span style="display:inline-block;transform:scaleX(0.955)">T = 22.1 °C</span></div>
<div class="t" style="left:-149.40px;width:600px;top:517.38px;text-align:center;font-weight:bold;font-size:22px;font-family:'Liberation Sans', sans-serif;color:#000;"><span style="display:inline-block;transform:scaleX(0.955)">Pipette ID</span></div>
<div class="t" style="left:61.10px;width:600px;top:517.38px;text-align:center;font-weight:bold;font-size:22px;font-family:'Liberation Sans', sans-serif;color:#000;"><span style="display:inline-block;transform:scaleX(0.96)">Pipette</span></div>
<div class="t" style="left:273.70px;width:600px;top:517.38px;text-align:center;font-weight:bold;font-size:22px;font-family:'Liberation Sans', sans-serif;color:#000;"><span style="display:inline-block;transform:scaleX(0.96)">V cal</span></div>
<div class="t" style="left:447.90px;width:600px;top:517.38px;text-align:center;font-weight:bold;font-size:22px;font-family:'Liberation Sans', sans-serif;color:#000;"><span style="display:inline-block;transform:scaleX(0.93)">dv</span></div>
<div class="t" style="left:-149.80px;width:600px;top:549.38px;text-align:center;font-weight:normal;font-size:22px;font-family:'Liberation Sans', sans-serif;color:#000;-webkit-text-stroke:0.3px #000;"><span style="display:inline-block;transform:scaleX(0.99)">6269</span></div>
<div class="t" style="left:60.00px;width:600px;top:549.38px;text-align:center;font-weight:normal;font-size:22px;font-family:'Liberation Sans', sans-serif;color:#000;-webkit-text-stroke:0.3px #000;"><span style="display:inline-block;transform:scaleX(0.99)">1000</span></div>
<div class="t" style="left:273.00px;width:600px;top:549.38px;text-align:center;font-weight:normal;font-size:22px;font-family:'Liberation Sans', sans-serif;color:#000;-webkit-text-stroke:0.3px #000;"><span style="display:inline-block;transform:scaleX(0.99)">1000</span></div>
<div class="t" style="left:449.30px;width:600px;top:549.38px;text-align:center;font-weight:normal;font-size:22px;font-family:'Liberation Sans', sans-serif;color:#000;-webkit-text-stroke:0.3px #000;"><span style="display:inline-block;transform:scaleX(0.99)">1005.17</span></div>
<div class="t" style="left:-149.80px;width:600px;top:581.38px;text-align:center;font-weight:normal;font-size:22px;font-family:'Liberation Sans', sans-serif;color:#000;-webkit-text-stroke:0.3px #000;"><span style="display:inline-block;transform:scaleX(0.99)">6269</span></div>
<div class="t" style="left:60.00px;width:600px;top:581.38px;text-align:center;font-weight:normal;font-size:22px;font-family:'Liberation Sans', sans-serif;color:#000;-webkit-text-stroke:0.3px #000;"><span style="display:inline-block;transform:scaleX(0.99)">1000</span></div>
<div class="t" style="left:273.00px;width:600px;top:581.38px;text-align:center;font-weight:normal;font-size:22px;font-family:'Liberation Sans', sans-serif;color:#000;-webkit-text-stroke:0.3px #000;"><span style="display:inline-block;transform:scaleX(0.99)">1000</span></div>
<div class="t" style="left:449.30px;width:600px;top:581.38px;text-align:center;font-weight:normal;font-size:22px;font-family:'Liberation Sans', sans-serif;color:#000;-webkit-text-stroke:0.3px #000;"><span style="display:inline-block;transform:scaleX(0.99)">1005.72</span></div>
<div class="t" style="left:-149.80px;width:600px;top:613.38px;text-align:center;font-weight:normal;font-size:22px;font-family:'Liberation Sans', sans-serif;color:#000;-webkit-text-stroke:0.3px #000;"><span style="display:inline-block;transform:scaleX(0.99)">6269</span></div>
<div class="t" style="left:60.00px;width:600px;top:613.38px;text-align:center;font-weight:normal;font-size:22px;font-family:'Liberation Sans', sans-serif;color:#000;-webkit-text-stroke:0.3px #000;"><span style="display:inline-block;transform:scaleX(0.99)">1000</span></div>
<div class="t" style="left:273.00px;width:600px;top:613.38px;text-align:center;font-weight:normal;font-size:22px;font-family:'Liberation Sans', sans-serif;color:#000;-webkit-text-stroke:0.3px #000;"><span style="display:inline-block;transform:scaleX(0.99)">1000</span></div>
<div class="t" style="left:449.30px;width:600px;top:613.38px;text-align:center;font-weight:normal;font-size:22px;font-family:'Liberation Sans', sans-serif;color:#000;-webkit-text-stroke:0.3px #000;"><span style="display:inline-block;transform:scaleX(0.99)">1005.15</span></div>
<div class="t" style="left:-149.80px;width:600px;top:645.38px;text-align:center;font-weight:normal;font-size:22px;font-family:'Liberation Sans', sans-serif;color:#000;-webkit-text-stroke:0.3px #000;"><span style="display:inline-block;transform:scaleX(0.99)">6269</span></div>
<div class="t" style="left:60.00px;width:600px;top:645.38px;text-align:center;font-weight:normal;font-size:22px;font-family:'Liberation Sans', sans-serif;color:#000;-webkit-text-stroke:0.3px #000;"><span style="display:inline-block;transform:scaleX(0.99)">1000</span></div>
<div class="t" style="left:273.00px;width:600px;top:645.38px;text-align:center;font-weight:normal;font-size:22px;font-family:'Liberation Sans', sans-serif;color:#000;-webkit-text-stroke:0.3px #000;"><span style="display:inline-block;transform:scaleX(0.99)">1000</span></div>
<div class="t" style="left:449.30px;width:600px;top:645.38px;text-align:center;font-weight:normal;font-size:22px;font-family:'Liberation Sans', sans-serif;color:#000;-webkit-text-stroke:0.3px #000;"><span style="display:inline-block;transform:scaleX(0.99)">1005.43</span></div>
<div class="t" style="left:273.20px;width:600px;top:677.38px;text-align:center;font-weight:bold;font-size:22px;font-family:'Liberation Sans', sans-serif;color:#000;"><span style="display:inline-block;transform:scaleX(1.0)">Mean =</span></div>
<div class="t" style="left:449.50px;width:600px;top:677.38px;text-align:center;font-weight:bold;font-size:22px;font-family:'Liberation Sans', sans-serif;color:#000;"><span style="display:inline-block;transform:scaleX(0.98)">1005.36</span></div>
<div class="t" style="left:273.70px;width:600px;top:709.38px;text-align:center;font-weight:bold;font-size:22px;font-family:'Liberation Sans', sans-serif;color:#000;"><span style="display:inline-block;transform:scaleX(0.913)">STDEV =</span></div>
<div class="t" style="left:449.50px;width:600px;top:709.38px;text-align:center;font-weight:bold;font-size:22px;font-family:'Liberation Sans', sans-serif;color:#000;"><span style="display:inline-block;transform:scaleX(1.0)">0.9</span></div>
<div class="t" style="left:-153.00px;width:600px;top:805.13px;text-align:center;font-weight:normal;font-size:24.8px;font-family:'Liberation Serif', serif;color:#000;"><span style="display:inline-block;transform:scaleX(0.962)">Date = 30:9:2022</span></div>
<div class="t" style="left:59.60px;width:600px;top:805.38px;text-align:center;font-weight:normal;font-size:22px;font-family:'Liberation Sans', sans-serif;color:#000;-webkit-text-stroke:0.3px #000;"><span style="display:inline-block;transform:scaleX(1.0)">Time = 9:12</span></div>
<div class="t" style="left:270.40px;width:600px;top:805.38px;text-align:center;font-weight:normal;font-size:22px;font-family:'Liberation Sans', sans-serif;color:#000;-webkit-text-stroke:0.3px #000;"><span style="display:inline-block;transform:scaleX(0.955)">T = 21.8 °C</span></div>
<div class="t" style="left:-149.40px;width:600px;top:837.38px;text-align:center;font-weight:bold;font-size:22px;font-family:'Liberation Sans', sans-serif;color:#000;"><span style="display:inline-block;transform:scaleX(0.955)">Pipette ID</span></div>
<div class="t" style="left:61.10px;width:600px;top:837.38px;text-align:center;font-weight:bold;font-size:22px;font-family:'Liberation Sans', sans-serif;color:#000;"><span style="display:inline-block;transform:scaleX(0.96)">Pipette</span></div>
<div class="t" style="left:273.70px;width:600px;top:837.38px;text-align:center;font-weight:bold;font-size:22px;font-family:'Liberation Sans', sans-serif;color:#000;"><span style="display:inline-block;transform:scaleX(0.96)">V cal</span></div>
<div class="t" style="left:447.90px;width:600px;top:837.38px;text-align:center;font-weight:bold;font-size:22px;font-family:'Liberation Sans', sans-serif;color:#000;"><span style="display:inline-block;transform:scaleX(0.93)">dv</span></div>
<div class="t" style="left:-149.80px;width:600px;top:869.38px;text-align:center;font-weight:normal;font-size:22px;font-family:'Liberation Sans', sans-serif;color:#000;-webkit-text-stroke:0.3px #000;"><span style="display:inline-block;transform:scaleX(0.99)">6269</span></div>
<div class="t" style="left:60.00px;width:600px;top:869.38px;text-align:center;font-weight:normal;font-size:22px;font-family:'Liberation Sans', sans-serif;color:#000;-webkit-text-stroke:0.3px #000;"><span style="display:inline-block;transform:scaleX(0.99)">1000</span></div>
<div class="t" style="left:273.00px;width:600px;top:869.38px;text-align:center;font-weight:normal;font-size:22px;font-family:'Liberation Sans', sans-serif;color:#000;-webkit-text-stroke:0.3px #000;"><span style="display:inline-block;transform:scaleX(0.99)">1000</span></div>
<div class="t" style="left:449.30px;width:600px;top:869.38px;text-align:center;font-weight:normal;font-size:22px;font-family:'Liberation Sans', sans-serif;color:#000;-webkit-text-stroke:0.3px #000;"><span style="display:inline-block;transform:scaleX(0.99)">1004.9</span></div>
<div class="t" style="left:-149.80px;width:600px;top:901.38px;text-align:center;font-weight:normal;font-size:22px;font-family:'Liberation Sans', sans-serif;color:#000;-webkit-text-stroke:0.3px #000;"><span style="display:inline-block;transform:scaleX(0.99)">6269</span></div>
<div class="t" style="left:60.00px;width:600px;top:901.38px;text-align:center;font-weight:normal;font-size:22px;font-family:'Liberation Sans', sans-serif;color:#000;-webkit-text-stroke:0.3px #000;"><span style="display:inline-block;transform:scaleX(0.99)">1000</span></div>
<div class="t" style="left:273.00px;width:600px;top:901.38px;text-align:center;font-weight:normal;font-size:22px;font-family:'Liberation Sans', sans-serif;color:#000;-webkit-text-stroke:0.3px #000;"><span style="display:inline-block;transform:scaleX(0.99)">1000</span></div>
<div class="t" style="left:449.30px;width:600px;top:901.38px;text-align:center;font-weight:normal;font-size:22px;font-family:'Liberation Sans', sans-serif;color:#000;-webkit-text-stroke:0.3px #000;"><span style="display:inline-block;transform:scaleX(0.99)">1005.86</span></div>
<div class="t" style="left:-149.80px;width:600px;top:933.38px;text-align:center;font-weight:normal;font-size:22px;font-family:'Liberation Sans', sans-serif;color:#000;-webkit-text-stroke:0.3px #000;"><span style="display:inline-block;transform:scaleX(0.99)">6269</span></div>
<div class="t" style="left:60.00px;width:600px;top:933.38px;text-align:center;font-weight:normal;font-size:22px;font-family:'Liberation Sans', sans-serif;color:#000;-webkit-text-stroke:0.3px #000;"><span style="display:inline-block;transform:scaleX(0.99)">1000</span></div>
<div class="t" style="left:273.00px;width:600px;top:933.38px;text-align:center;font-weight:normal;font-size:22px;font-family:'Liberation Sans', sans-serif;color:#000;-webkit-text-stroke:0.3px #000;"><span style="display:inline-block;transform:scaleX(0.99)">1000</span></div>
<div class="t" style="left:449.30px;width:600px;top:933.38px;text-align:center;font-weight:normal;font-size:22px;font-family:'Liberation Sans', sans-serif;color:#000;-webkit-text-stroke:0.3px #000;"><span style="display:inline-block;transform:scaleX(0.99)">1005.91</span></div>
<div class="t" style="left:-149.80px;width:600px;top:965.38px;text-align:center;font-weight:normal;font-size:22px;font-family:'Liberation Sans', sans-serif;color:#000;-webkit-text-stroke:0.3px #000;"><span style="display:inline-block;transform:scaleX(0.99)">6269</span></div>
<div class="t" style="left:60.00px;width:600px;top:965.38px;text-align:center;font-weight:normal;font-size:22px;font-family:'Liberation Sans', sans-serif;color:#000;-webkit-text-stroke:0.3px #000;"><span style="display:inline-block;transform:scaleX(0.99)">1000</span></div>
<div class="t" style="left:273.00px;width:600px;top:965.38px;text-align:center;font-weight:normal;font-size:22px;font-family:'Liberation Sans', sans-serif;color:#000;-webkit-text-stroke:0.3px #000;"><span style="display:inline-block;transform:scaleX(0.99)">1000</span></div>
<div class="t" style="left:449.30px;width:600px;top:965.38px;text-align:center;font-weight:normal;font-size:22px;font-family:'Liberation Sans', sans-serif;color:#000;-webkit-text-stroke:0.3px #000;"><span style="display:inline-block;transform:scaleX(0.99)">1005.9</span></div>
<div class="t" style="left:273.20px;width:600px;top:997.38px;text-align:center;font-weight:bold;font-size:22px;font-family:'Liberation Sans', sans-serif;color:#000;"><span style="display:inline-block;transform:scaleX(1.0)">Mean =</span></div>
<div class="t" style="left:449.50px;width:600px;top:997.38px;text-align:center;font-weight:bold;font-size:22px;font-family:'Liberation Sans', sans-serif;color:#000;"><span style="display:inline-block;transform:scaleX(0.98)">1005.45</span></div>
<div class="t" style="left:273.70px;width:600px;top:1029.38px;text-align:center;font-weight:bold;font-size:22px;font-family:'Liberation Sans', sans-serif;color:#000;"><span style="display:inline-block;transform:scaleX(0.913)">STDEV =</span></div>
<div class="t" style="left:449.50px;width:600px;top:1029.38px;text-align:center;font-weight:bold;font-size:22px;font-family:'Liberation Sans', sans-serif;color:#000;"><span style="display:inline-block;transform:scaleX(1.0)">0.9</span></div>
<div class="t" style="left:-153.00px;width:600px;top:1125.13px;text-align:center;font-weight:normal;font-size:24.8px;font-family:'Liberation Serif', serif;color:#000;"><span style="display:inline-block;transform:scaleX(0.962)">Date = 26:9:2022</span></div>
<div class="t" style="left:59.60px;width:600px;top:1125.38px;text-align:center;font-weight:normal;font-size:22px;font-family:'Liberation Sans', sans-serif;color:#000;-webkit-text-stroke:0.3px #000;"><span style="display:inline-block;transform:scaleX(1.0)">Time = 8:42</span></div>
<div class="t" style="left:270.40px;width:600px;top:1125.38px;text-align:center;font-weight:normal;font-size:22px;font-family:'Liberation Sans', sans-serif;color:#000;-webkit-text-stroke:0.3px #000;"><span style="display:inline-block;transform:scaleX(0.955)">T = 22.3 °C</span></div>
<div class="t" style="left:-149.40px;width:600px;top:1157.38px;text-align:center;font-weight:bold;font-size:22px;font-family:'Liberation Sans', sans-serif;color:#000;"><span style="display:inline-block;transform:scaleX(0.955)">Pipette ID</span></div>
<div class="t" style="left:61.10px;width:600px;top:1157.38px;text-align:center;font-weight:bold;font-size:22px;font-family:'Liberation Sans', sans-serif;color:#000;"><span style="display:inline-block;transform:scaleX(0.96)">Pipette</span></div>
<div class="t" style="left:273.70px;width:600px;top:1157.38px;text-align:center;font-weight:bold;font-size:22px;font-family:'Liberation Sans', sans-serif;color:#000;"><span style="display:inline-block;transform:scaleX(0.96)">V cal</span></div>
<div class="t" style="left:447.90px;width:600px;top:1157.38px;text-align:center;font-weight:bold;font-size:22px;font-family:'Liberation Sans', sans-serif;color:#000;"><span style="display:inline-block;transform:scaleX(0.93)">dv</span></div>
<div class="t" style="left:-149.80px;width:600px;top:1189.38px;text-align:center;font-weight:normal;font-size:22px;font-family:'Liberation Sans', sans-serif;color:#000;-webkit-text-stroke:0.3px #000;"><span style="display:inline-block;transform:scaleX(0.99)">6269</span></div>
<div class="t" style="left:60.00px;width:600px;top:1189.38px;text-align:center;font-weight:normal;font-size:22px;font-family:'Liberation Sans', sans-serif;color:#000;-webkit-text-stroke:0.3px #000;"><span style="display:inline-block;transform:scaleX(0.99)">1000</span></div>
<div class="t" style="left:273.00px;width:600px;top:1189.38px;text-align:center;font-weight:normal;font-size:22px;font-family:'Liberation Sans', sans-serif;color:#000;-webkit-text-stroke:0.3px #000;"><span style="display:inline-block;transform:scaleX(0.99)">1000</span></div>
<div class="t" style="left:449.30px;width:600px;top:1189.38px;text-align:center;font-weight:normal;font-size:22px;font-family:'Liberation Sans', sans-serif;color:#000;-webkit-text-stroke:0.3px #000;"><span style="display:inline-block;transform:scaleX(0.99)">1003.32</span></div>
<div class="r" style="left:847px;top:231px;width:534px;height:430px;background:#fff;border:2px solid #d9d9d9;border-radius:2px;"></div>
<div class="r" style="left:914px;top:305px;width:448px;height:2px;background:#d9d9d9;"></div>
<div class="t" style="left:297.50px;width:600px;top:305.18px;text-align:right;font-weight:normal;font-size:16.5px;font-family:'Liberation Sans', sans-serif;color:#595959;-webkit-text-stroke:0.3px #595959;"><span style="display:inline-block;transform-origin:100% 0;transform:scaleX(0.99)">1011</span></div>
<div class="r" style="left:914px;top:357px;width:448px;height:2px;background:#d9d9d9;"></div>
<div class="t" style="left:297.50px;width:600px;top:357.28px;text-align:right;font-weight:normal;font-size:16.5px;font-family:'Liberation Sans', sans-serif;color:#595959;-webkit-text-stroke:0.3px #595959;"><span style="display:inline-block;transform-origin:100% 0;transform:scaleX(0.99)">1009</span></div>
<div class="r" style="left:914px;top:409px;width:448px;height:2px;background:#d9d9d9;"></div>
<div class="t" style="left:297.50px;width:600px;top:409.38px;text-align:right;font-weight:normal;font-size:16.5px;font-family:'Liberation Sans', sans-serif;color:#595959;-webkit-text-stroke:0.3px #595959;"><span style="display:inline-block;transform-origin:100% 0;transform:scaleX(0.99)">1007</span></div>
<div class="r" style="left:914px;top:461px;width:448px;height:2px;background:#d9d9d9;"></div>
<div class="t" style="left:297.50px;width:600px;top:461.48px;text-align:right;font-weight:normal;font-size:16.5px;font-family:'Liberation Sans', sans-serif;color:#595959;-webkit-text-stroke:0.3px #595959;"><span style="display:inline-block;transform-origin:100% 0;transform:scaleX(0.99)">1005</span></div>
<div class="r" style="left:914px;top:513px;width:448px;height:2px;background:#d9d9d9;"></div>
<div class="t" style="left:297.50px;width:600px;top:513.48px;text-align:right;font-weight:normal;font-size:16.5px;font-family:'Liberation Sans', sans-serif;color:#595959;-webkit-text-stroke:0.3px #595959;"><span style="display:inline-block;transform-origin:100% 0;transform:scaleX(0.99)">1003</span></div>
<div class="r" style="left:914px;top:565px;width:448px;height:2px;background:#d9d9d9;"></div>
<div class="t" style="left:297.50px;width:600px;top:565.48px;text-align:right;font-weight:normal;font-size:16.5px;font-family:'Liberation Sans', sans-serif;color:#595959;-webkit-text-stroke:0.3px #595959;"><span style="display:inline-block;transform-origin:100% 0;transform:scaleX(0.99)">1001</span></div>
<div class="r" style="left:914px;top:617px;width:448px;height:2px;background:#d9d9d9;"></div>
<div class="t" style="left:297.50px;width:600px;top:617.48px;text-align:right;font-weight:normal;font-size:16.5px;font-family:'Liberation Sans', sans-serif;color:#595959;-webkit-text-stroke:0.3px #595959;"><span style="display:inline-block;transform-origin:100% 0;transform:scaleX(0.99)">999</span></div>
<div class="r" style="left:931.1px;top:471.1px;width:15.8px;height:145.9px;background:#4f71be;"></div>
<div class="t" style="left:639.00px;width:600px;top:642.28px;text-align:center;font-weight:normal;font-size:16.5px;font-family:'Liberation Sans', sans-serif;color:#595959;-webkit-text-stroke:0.3px #595959;"><span style="display:inline-block;transform:scaleX(1.0)">1</span></div>
<div class="r" style="left:981.1px;top:453.0px;width:15.7px;height:164.0px;background:#4f71be;"></div>
<div class="t" style="left:688.95px;width:600px;top:642.28px;text-align:center;font-weight:normal;font-size:16.5px;font-family:'Liberation Sans', sans-serif;color:#595959;-webkit-text-stroke:0.3px #595959;"><span style="display:inline-block;transform:scaleX(1.0)">2</span></div>
<div class="r" style="left:1031.1px;top:439.1px;width:14.7px;height:177.9px;background:#4f71be;"></div>
<div class="t" style="left:738.45px;width:600px;top:642.28px;text-align:center;font-weight:normal;font-size:16.5px;font-family:'Liberation Sans', sans-serif;color:#595959;-webkit-text-stroke:0.3px #595959;"><span style="display:inline-block;transform:scaleX(1.0)">3</span></div>
<div class="r" style="left:1081.2px;top:433.1px;width:14.6px;height:183.9px;background:#4f71be;"></div>
<div class="t" style="left:788.50px;width:600px;top:642.28px;text-align:center;font-weight:normal;font-size:16.5px;font-family:'Liberation Sans', sans-serif;color:#595959;-webkit-text-stroke:0.3px #595959;"><span style="display:inline-block;transform:scaleX(1.0)">4</span></div>
<div class="r" style="left:1130.1px;top:496.1px;width:15.8px;height:120.9px;background:#4f71be;"></div>
<div class="t" style="left:838.00px;width:600px;top:642.28px;text-align:center;font-weight:normal;font-size:16.5px;font-family:'Liberation Sans', sans-serif;color:#595959;-webkit-text-stroke:0.3px #595959;"><span style="display:inline-block;transform:scaleX(1.0)">5</span></div>
<div class="r" style="left:1180.0px;top:482.1px;width:16px;height:134.9px;background:#4f71be;"></div>
<div class="t" style="left:888.00px;width:600px;top:642.28px;text-align:center;font-weight:normal;font-size:16.5px;font-family:'Liberation Sans', sans-serif;color:#595959;-webkit-text-stroke:0.3px #595959;"><span style="display:inline-block;transform:scaleX(1.0)">6</span></div>
<div class="r" style="left:1230.0px;top:485.0px;width:14.9px;height:132.0px;background:#4f71be;"></div>
<div class="t" style="left:937.45px;width:600px;top:642.28px;text-align:center;font-weight:normal;font-size:16.5px;font-family:'Liberation Sans', sans-serif;color:#595959;-webkit-text-stroke:0.3px #595959;"><span style="display:inline-block;transform:scaleX(1.0)">7</span></div>
<div class="r" style="left:1280.1px;top:490.0px;width:14.9px;height:127.0px;background:#4f71be;"></div>
<div class="t" style="left:987.55px;width:600px;top:642.28px;text-align:center;font-weight:normal;font-size:16.5px;font-family:'Liberation Sans', sans-serif;color:#595959;-webkit-text-stroke:0.3px #595959;"><span style="display:inline-block;transform:scaleX(1.0)">8</span></div>
<div class="r" style="left:1329.2px;top:479.1px;width:15.7px;height:137.9px;background:#4f71be;"></div>
<div class="t" style="left:1037.05px;width:600px;top:642.28px;text-align:center;font-weight:normal;font-size:16.5px;font-family:'Liberation Sans', sans-serif;color:#595959;-webkit-text-stroke:0.3px #595959;"><span style="display:inline-block;transform:scaleX(1.0)">9</span></div>
<div class="t" style="left:816.00px;width:600px;top:263.99px;text-align:center;font-weight:normal;font-size:26px;font-family:'Liberation Sans', sans-serif;color:#595959;-webkit-text-stroke:0.2px #595959;"><span style="display:inline-block;transform:scaleX(0.97)">dV</span></div>
</body></html>
